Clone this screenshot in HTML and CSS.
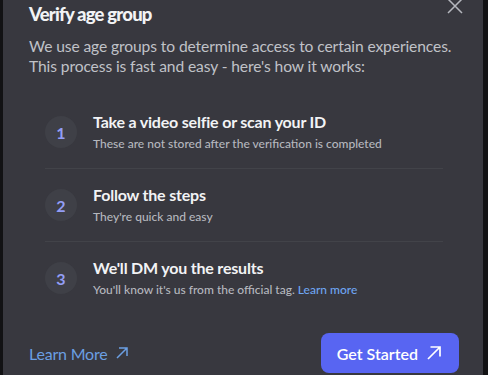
FILE: index.html
```html
<!DOCTYPE html>
<html>
<head>
<meta name="viewport" content="width=device-width, initial-scale=1">
<link rel="stylesheet" href="styles.css">
</head>
<body>
<div class="modal">
  <button class="close" aria-label="Close">
    <svg width="16" height="16" viewBox="0 0 16 16"><path d="M1 1 L15 15 M15 1 L1 15" stroke="currentColor" stroke-width="1.5" fill="none"/></svg>
  </button>

  <h1 class="title">Verify age group</h1>
  <p class="desc">We use age groups to determine access to certain experiences.<br>This process is fast and easy - here's how it works:</p>

  <div class="steps">
    <div class="step">
      <div class="num">1</div>
      <div class="step-text">
        <div class="step-title">Take a video selfie or scan your ID</div>
        <div class="step-sub">These are not stored after the verification is completed</div>
      </div>
    </div>
    <div class="step">
      <div class="num">2</div>
      <div class="step-text">
        <div class="step-title">Follow the steps</div>
        <div class="step-sub">They're quick and easy</div>
      </div>
    </div>
    <div class="step">
      <div class="num">3</div>
      <div class="step-text">
        <div class="step-title">We'll DM you the results</div>
        <div class="step-sub">You'll know it's us from the official tag. <a href="#" class="link">Learn more</a></div>
      </div>
    </div>
  </div>

  <div class="footer">
    <a href="#" class="learn">Learn More
      <svg width="12" height="12" viewBox="0 0 12 12"><path d="M1 11 L11 1 M3 1 H11 V9" stroke="currentColor" stroke-width="1.5" fill="none"/></svg>
    </a>
    <button class="start">Get Started
      <svg width="16" height="16" viewBox="0 0 16 16"><path d="M2 14 L14 2 M4.5 2 H14 V11.5" stroke="currentColor" stroke-width="1.7" fill="none"/></svg>
    </button>
  </div>
</div>
</body>
</html>
```

FILE: styles.css
```css
body {
  margin: 0;
  background: #121214;
  font-family: Lato, "Noto Sans", sans-serif;
  overflow: hidden;
}

.modal {
  position: relative;
  margin-left: 3px;
  width: 480px;
  height: 375px;
  box-sizing: border-box;
  padding: 2px 24px 0 26px;
  background: #38383f;
}

.close {
  position: absolute;
  top: -2px;
  right: 20px;
  padding: 0;
  border: 0;
  background: none;
  color: #b5b7be;
}

.title {
  margin: 0;
  font-size: 18.5px;
  line-height: 24px;
  letter-spacing: -0.8px;
  font-weight: 900;
  color: #f2f3f5;
}

.desc {
  margin: 10px 0 0;
  font-size: 15.6px;
  line-height: 20px;
  letter-spacing: -0.1px;
  white-space: nowrap;
  color: #c0c2c8;
}

.steps {
  margin-top: 20px;
  padding: 0 16px;
}

.step {
  display: flex;
  align-items: center;
  gap: 16px;
  padding: 16px 0;
  border-bottom: 1px solid #424349;
}

.step:last-child {
  border-bottom: 0;
}

.num {
  width: 32px;
  height: 32px;
  border-radius: 50%;
  background: #3f4047;
  color: #939df5;
  font-size: 16px;
  font-weight: 700;
  display: flex;
  align-items: center;
  justify-content: center;
  flex-shrink: 0;
}

.step-title {
  font-size: 16px;
  line-height: 20px;
  letter-spacing: -0.2px;
  font-weight: 700;
  color: #f2f3f5;
}

.step-sub {
  margin-top: 4px;
  font-size: 12px;
  line-height: 16px;
  font-weight: 500;
  color: #b5b7be;
}

.link {
  color: #6ea5f2;
  text-decoration: none;
}

.footer {
  margin-top: 19px;
  display: flex;
  align-items: center;
  justify-content: space-between;
}

.learn {
  display: flex;
  align-items: center;
  gap: 8px;
  font-size: 16px;
  letter-spacing: -0.2px;
  color: #6b9fe3;
  text-decoration: none;
}

.start {
  display: flex;
  align-items: center;
  gap: 8px;
  height: 40px;
  padding: 0 17px 0 16px;
  border: 0;
  border-radius: 8px;
  background: #5865f2;
  color: #ffffff;
  font-family: inherit;
  font-size: 16px;
  font-weight: 600;
}
```
